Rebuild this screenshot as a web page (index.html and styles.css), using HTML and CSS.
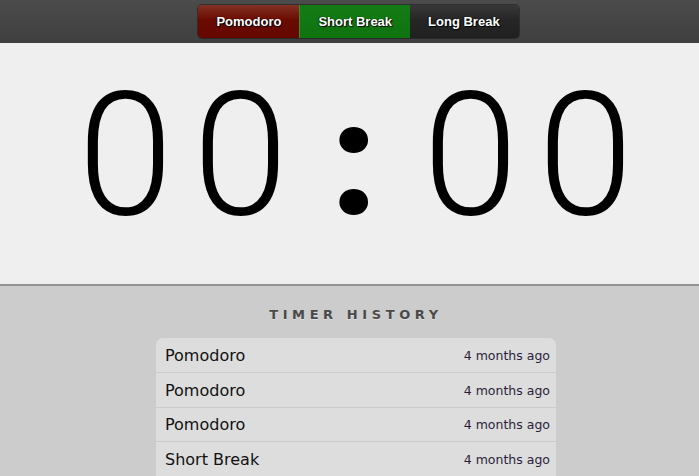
FILE: index.html
```html
<!DOCTYPE html>
<html lang="en">
<head>
<meta charset="utf-8">
<title>Pomodoro Timer</title>
<link rel="stylesheet" href="styles.css">
</head>
<body>
<header class="topbar">
  <nav class="modes">
    <button class="mode mode-pomodoro">Pomodoro</button>
    <button class="mode mode-short">Short Break</button>
    <button class="mode mode-long">Long Break</button>
  </nav>
</header>
<section class="timer">
  <div class="clock"><span class="digit">0</span><span class="digit">0</span><span class="colon">:</span><span class="digit">0</span><span class="digit">0</span></div>
</section>
<section class="history">
  <h2 class="history-title">TIMER HISTORY</h2>
  <ul class="history-list">
    <li class="history-item"><span class="name">Pomodoro</span><span class="when">4 months ago</span></li>
    <li class="history-item"><span class="name">Pomodoro</span><span class="when">4 months ago</span></li>
    <li class="history-item"><span class="name">Pomodoro</span><span class="when">4 months ago</span></li>
    <li class="history-item"><span class="name">Short Break</span><span class="when">4 months ago</span></li>
  </ul>
</section>
</body>
</html>
```

FILE: styles.css
```css
html, body {
  margin: 0;
  padding: 0;
  overflow: hidden;
}
body {
  background: #cccccc;
  font-family: "DejaVu Sans", Verdana, sans-serif;
  height: 476px;
}
.topbar {
  height: 43px;
  background: linear-gradient(#4b4b4b, #3f3f3f);
  display: flex;
  justify-content: center;
  align-items: flex-start;
  padding-left: 18px;
  box-sizing: border-box;
}
.modes {
  display: flex;
  margin-top: 5px;
  border-radius: 4px;
  box-shadow: 0 0 0 1px rgba(0,0,0,0.35);
}
.mode {
  height: 33px;
  padding: 0 18px;
  border: 0;
  margin: 0;
  font-family: "Liberation Sans", Arial, sans-serif;
  font-weight: bold;
  font-size: 13px;
  color: #ffffff;
  text-shadow: 1px 1px 1px #000, -1px 0 1px rgba(0,0,0,0.6);
  cursor: pointer;
}
.mode-pomodoro {
  background: linear-gradient(#843126, #6b0b00 45%, #650700);
  border-radius: 4px 0 0 4px;
  border-right: 1px solid #3f8a3a;
}
.mode-short {
  background: linear-gradient(#147c14, #0f730f);
}
.mode-long {
  background: linear-gradient(#383838, #262626 45%, #202020);
  border-radius: 0 4px 4px 0;
  padding-right: 19px;
}
.timer {
  height: 243px;
  background: #efefef;
  border-bottom: 2px solid #929292;
  box-sizing: border-box;
  display: flex;
  justify-content: center;
  padding-left: 12px;
  padding-top: 23px;
}
.clock {
  display: flex;
  align-items: baseline;
  height: 178px;
  font-family: Roboto, "Liberation Sans", sans-serif;
  line-height: 178px;
  color: #000;
}
.digit {
  width: 115px;
  text-align: center;
  font-weight: 300;
  font-size: 172px;
}
.colon {
  width: 112px;
  margin-right: 3px;
  text-align: center;
  font-weight: 900;
  font-size: 158px;
}
.history {
  display: flex;
  flex-direction: column;
  align-items: center;
  padding-left: 13px;
}
.history-title {
  margin: 21px 0 0 0;
  font-family: "DejaVu Sans", Verdana, sans-serif;
  font-weight: bold;
  font-size: 13px;
  letter-spacing: 4.6px;
  color: #4a4a4a;
  text-shadow: 0 1px 0 #dedede;
  height: 31px;
}
.history-list {
  list-style: none;
  margin: 0;
  padding: 0;
  width: 400px;
  background: #dddddd;
  border-radius: 7px 7px 0 0;
}
.history-item {
  display: flex;
  justify-content: space-between;
  align-items: center;
  height: 34px;
  padding: 0 6px 0 9px;
  border-bottom: 1px solid #cacaca;
  box-sizing: content-box;
}
.history-item:nth-child(3) {
  height: 33px;
}
.name {
  font-size: 16px;
  color: #111111;
}
.when {
  font-size: 12.5px;
  color: #2a1d3a;
}
```
